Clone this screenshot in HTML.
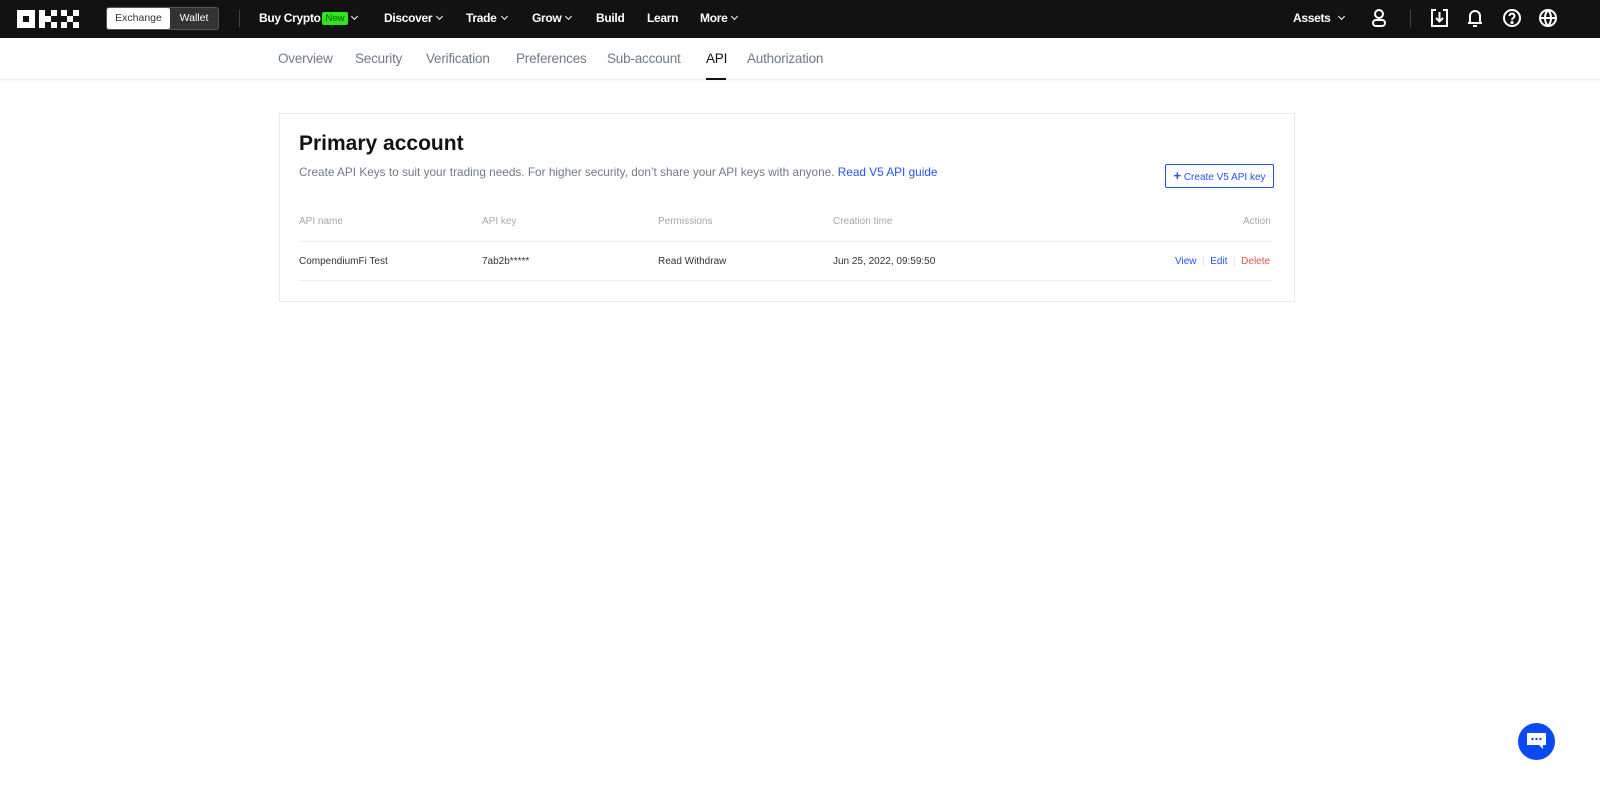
<!DOCTYPE html>
<html><head><style>
*{margin:0;padding:0;box-sizing:border-box}
body{width:1600px;height:787px;background:#fff;font-family:"Liberation Sans",sans-serif;position:relative;overflow:hidden}
.top{position:absolute;left:0;top:0;width:1600px;height:38px;background:#121212;color:#fff}
.top span{position:absolute;top:11px;font-size:12px;font-weight:bold;white-space:nowrap;letter-spacing:-0.3px}
.chev{display:inline-block;width:5px;height:5px;border-right:1.5px solid #fff;border-bottom:1.5px solid #fff;transform:rotate(45deg);margin-left:5px;position:relative;top:-3px}
.sub{position:absolute;top:0;height:80px;left:0;width:1600px;border-bottom:1px solid #eee;box-shadow:0 1px 3px rgba(0,0,0,.04)}
.sub span{position:absolute;top:51px;font-size:13.5px;color:#707a8a;letter-spacing:-0.2px}
.card{position:absolute;left:279px;top:113px;width:1016px;height:189px;border:1px solid #eaeaea}
.s{position:absolute;font-size:11px;white-space:nowrap}
.ic{position:absolute;top:9px}
</style></head><body>
<div class="top">
<svg class="ic" style="left:17px;top:10px" width="67" height="18" viewBox="0 0 67 18" fill="#fff"><rect x="0" y="0" width="18" height="18"/><rect x="6" y="6" width="6" height="6" fill="#121212"/><rect x="22" y="0" width="6" height="18"/><rect x="28" y="6" width="6" height="6"/><rect x="34" y="0" width="6" height="6"/><rect x="34" y="12" width="6" height="6"/><rect x="44" y="0" width="6" height="6"/><rect x="56" y="0" width="6" height="6"/><rect x="50" y="6" width="6" height="6"/><rect x="44" y="12" width="6" height="6"/><rect x="56" y="12" width="6" height="6"/></svg>
<div style="position:absolute;left:106px;top:7px;width:113px;height:23px;border:1px solid #555;border-radius:3px;background:#333"></div>
<div style="position:absolute;left:107px;top:8px;width:63px;height:21px;background:#fff;border-radius:2px;color:#333;font-size:10.5px;text-align:center;line-height:21px">Exchange</div>
<div style="position:absolute;left:170px;top:8px;width:48px;height:21px;color:#fff;font-size:10.5px;text-align:center;line-height:21px">Wallet</div>
<div style="position:absolute;left:239px;top:10px;width:1px;height:17px;background:#444"></div>
<span style="left:259px">Buy Crypto</span>
<div style="position:absolute;left:322px;top:12px;width:26px;height:13px;background:#2ee61a;font-size:9.5px;line-height:13px;text-align:center;border-radius:2px;color:#0a5a00">New</div>
<span style="left:347px"><i class="chev"></i></span>
<span style="left:384px">Discover<i class="chev"></i></span>
<span style="left:466px">Trade<i class="chev"></i></span>
<span style="left:532px">Grow<i class="chev"></i></span>
<span style="left:596px">Build</span>
<span style="left:647px">Learn</span>
<span style="left:700px">More<i class="chev"></i></span>
<span style="left:1293px">Assets<i class="chev" style="width:5px;height:5px;margin-left:8px"></i></span>
<svg class="ic" style="left:1371px" width="16" height="19" viewBox="0 0 16 19" fill="none" stroke="#fff" stroke-width="2"><circle cx="8" cy="5" r="4"/><rect x="2" y="11" width="12" height="6" rx="3"/></svg>
<div style="position:absolute;left:1410px;top:10px;width:1px;height:17px;background:#444"></div>
<svg class="ic" style="left:1431px" width="17" height="18" viewBox="0 0 17 18" fill="none" stroke="#fff" stroke-width="2"><path d="M5 1H1v16h15V1h-4M8.5 3v9M5 9l3.5 3.5L12 9"/></svg>
<svg class="ic" style="left:1467px" width="16" height="19" viewBox="0 0 16 19" fill="none" stroke="#fff" stroke-width="2"><path d="M3 14V7a5 5 0 0110 0v7M1 14h14M6 17h4"/></svg>
<svg class="ic" style="left:1503px" width="18" height="18" viewBox="0 0 18 18" fill="none" stroke="#fff" stroke-width="2"><circle cx="9" cy="9" r="8"/><path d="M6.5 7a2.5 2.5 0 115 0c0 2-2.5 2-2.5 4"/><circle cx="9" cy="13.5" r=".6" fill="#fff"/></svg>
<svg class="ic" style="left:1539px" width="18" height="18" viewBox="0 0 18 18" fill="none" stroke="#fff" stroke-width="2"><circle cx="9" cy="9" r="8"/><path d="M1 9h16M9 1c-4 4-4 12 0 16M9 1c4 4 4 12 0 16"/></svg>
</div>
<div class="sub">
<span style="left:278px">Overview</span><span style="left:355px">Security</span><span style="left:426px">Verification</span><span style="left:516px">Preferences</span><span style="left:607px">Sub-account</span><span style="left:706px;color:#121212">API</span><span style="left:747px">Authorization</span>
<div style="position:absolute;left:706px;top:78px;width:20px;height:2px;background:#121212"></div>
</div>
<div class="card"></div>
<div style="position:absolute;left:299px;top:132px;font-size:21px;font-weight:bold;color:#121212">Primary account</div>
<div class="s" style="left:299px;top:165px;font-size:11.8px;color:#707a8a">Create API Keys to suit your trading needs. For higher security, don’t share your API keys with anyone. <span style="color:#2154f5">Read V5 API guide</span></div>
<div style="position:absolute;left:1165px;top:164px;width:109px;height:24px;border:1px solid #2154f5;border-radius:2px;color:#2154f5;font-size:10px;line-height:22px;text-align:center"><b style="font-size:13px">+</b> Create V5 API key</div>
<div class="s" style="left:299px;top:216px;color:#a0a8b4;font-size:10px">API name</div>
<div class="s" style="left:482px;top:216px;color:#a0a8b4;font-size:10px">API key</div>
<div class="s" style="left:658px;top:216px;color:#a0a8b4;font-size:10px">Permissions</div>
<div class="s" style="left:833px;top:216px;color:#a0a8b4;font-size:10px">Creation time</div>
<div class="s" style="left:1243px;top:216px;color:#a0a8b4;font-size:10px">Action</div>
<div style="position:absolute;left:299px;top:241px;width:974px;height:1px;background:#eee"></div>
<div style="position:absolute;left:299px;top:280px;width:974px;height:1px;background:#eee"></div>
<div class="s" style="left:299px;top:256px;color:#333;font-size:10px">CompendiumFi Test</div>
<div class="s" style="left:482px;top:256px;color:#333;font-size:10px">7ab2b*****</div>
<div class="s" style="left:658px;top:256px;color:#333;font-size:10px">Read Withdraw</div>
<div class="s" style="left:833px;top:256px;color:#333;font-size:10px">Jun 25, 2022, 09:59:50</div>
<div class="s" style="left:1175px;top:256px;font-size:10px;color:#2154f5">View <span style="color:#ddd">&nbsp;|&nbsp;</span> Edit <span style="color:#ddd">&nbsp;|&nbsp;</span> <span style="color:#e5534b">Delete</span></div>
<div style="position:absolute;left:1518px;top:723px;width:37px;height:37px;border-radius:50%;background:#0b49f5"></div>
<svg style="position:absolute;left:1527px;top:733px" width="19" height="17" viewBox="0 0 19 17"><path d="M0 0h19v12h-3v4l-4-4H0z" fill="#fff"/><circle cx="5.5" cy="6" r="1.2" fill="#0b49f5"/><circle cx="9.5" cy="6" r="1.2" fill="#0b49f5"/><circle cx="13.5" cy="6" r="1.2" fill="#0b49f5"/></svg>
</body></html>
